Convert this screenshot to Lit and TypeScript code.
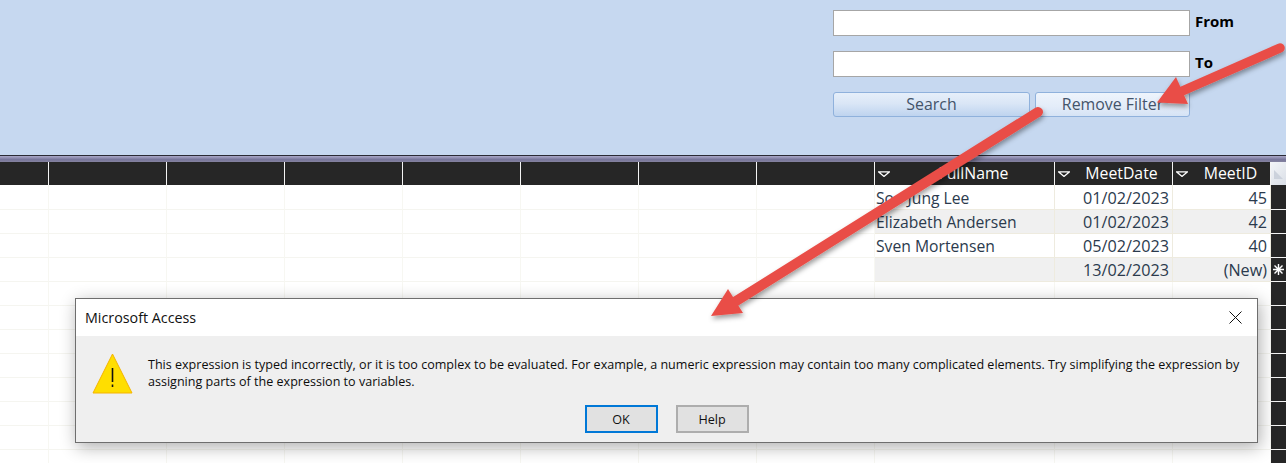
import { LitElement, html, css, svg } from "lit";
import { customElement } from "lit/decorators.js";

const blanks = [49, 118, 118, 118, 118, 118, 118, 118];
const rows = [
  ["Soo Jung Lee", "01/02/2023", "45", ""],
  ["Elizabeth Andersen", "01/02/2023", "42", ""],
  ["Sven Mortensen", "05/02/2023", "40", ""],
  ["", "13/02/2023", "(New)", "new"],
  ["", "", "", ""], ["", "", "", ""], ["", "", "", ""], ["", "", "", ""],
  ["", "", "", ""], ["", "", "", ""], ["", "", "", ""], ["", "", "", ""],
];

@customElement("app-root")
export class AppRoot extends LitElement {
  static styles = css`
    :host { display: block; position: relative; width: 1286px; height: 463px; overflow: hidden; background: #fff;
      font-family: "Open Sans", "Noto Sans", sans-serif; color: #2b3a4d; }
    .band { height: 155px; box-sizing: border-box; background: #c6d8f0; padding: 10px 0 0 833px; display: flex; flex-direction: column; gap: 15px; }
    .field { display: flex; align-items: center; gap: 5px; height: 26px; }
    .field input { width: 357px; height: 26px; box-sizing: border-box; border: 1px solid #a6a6a6; background: #fff; margin: 0; padding: 0; }
    .field label { font-weight: 700; font-size: 15px; color: #000; position: relative; top: -2px; }
    .btns { display: flex; gap: 5px; }
    .btn { height: 25px; box-sizing: border-box; border: 1px solid #8fb1dc; border-radius: 3px; font-size: 15.9px; color: #44546a; text-align: center; line-height: 23px;
      background: linear-gradient(#e6effa, #dae6f6 45%, #bed3ef); }
    .search { width: 197px; }
    .remove { width: 155px; background: linear-gradient(#eef4fc, #e3ecf9 60%, #d5e3f5); }
    .divider { height: 7px; border-top: 1px solid #2a2a35; box-sizing: border-box; background: linear-gradient(#aaa8c8, #77759a 60%, #85839f); }
    .grid { display: grid; grid-template-columns: 49px repeat(7, 118px) 180px 118px 98px 15px; }
    .hd { height: 23px; background: #262626; box-sizing: border-box; border-right: 1px solid #f4f4f4; color: #fff; font-size: 15.8px; line-height: 22px; text-align: center; position: relative; white-space: nowrap; }
    .hd.name { padding-left: 18px; }
    .hd.date { padding-left: 16px; }
    .hd.id { padding-left: 18px; }
    .hd svg { position: absolute; left: 3px; top: 9px; }
    .sel-hd { height: 23px; background: linear-gradient(135deg, #f3f5f8, #d9dee6); display: flex; align-items: flex-start; justify-content: center; padding-top: 8px; box-sizing: border-box; }
    .c { height: 24px; box-sizing: border-box; border-right: 1px solid #f7f7f2; border-bottom: 1px solid #f5f5f0; background: #fff; line-height: 24px; white-space: nowrap; overflow: hidden; }
    .c.top { height: 25px; padding-top: 1px; }
    .c.data { border-right-color: #eeebdf; border-bottom-color: #eeebdf; color: #2b3a4d; }
    .c.alt { background: #f0f0f0; }
    .c.txt { padding-left: 1px; font-size: 15.7px; }
    .c.num { padding-right: 3px; text-align: right; font-size: 16.2px; }
    .sel { height: 24px; box-sizing: border-box; background: #262626; border-bottom: 1px solid #f4f4f4; display: flex; align-items: center; justify-content: center; }
    .sel.top { height: 25px; }
    .arrows { position: absolute; left: 0; top: 0; z-index: 3; pointer-events: none; overflow: visible; }
    .dialog { position: absolute; left: 75px; top: 298px; width: 1183px; height: 145px; box-sizing: border-box; z-index: 2; border: 1px solid #6e6e6e; background: #efefef;
      box-shadow: 2px 4px 16px rgba(0,0,0,.32); color: #000; display: flex; flex-direction: column; }
    .title { height: 37px; flex: none; background: #fff; display: flex; align-items: center; justify-content: space-between; padding: 0 15px 0 9px; font-size: 14.3px; color: #111; }
    .body { flex: none; height: 69px; box-sizing: border-box; display: flex; padding: 17px 0 0 16px; gap: 15px; }
    .msg { font-size: 12.55px; line-height: 17px; width: 1100px; margin-top: 3px; color: #0c0c0c; }
    .actions { display: flex; justify-content: center; gap: 18px; }
    .ok, .help { width: 73px; height: 28px; box-sizing: border-box; background: #e1e1e1; border: 2px solid #adadad; font-size: 12.6px; text-align: center; line-height: 26px; color: #111; }
    .ok { border-color: #0078d7; }
  `;

  private filter() {
    return html`<svg width="12" height="6" viewBox="0 0 12 6"><path d="M.5 .8h11L6 5.500z" fill="none" stroke="#fff" stroke-width="1.200"/></svg>`;
  }

  render() {
    return html`
      <div class="band">
        <div class="field"><input /><label>From</label></div>
        <div class="field"><input /><label>To</label></div>
        <div class="btns"><div class="btn search">Search</div><div class="btn remove">Remove Filter</div></div>
      </div>
      <div class="divider"></div>
      <div class="grid">
        ${blanks.map(() => html`<div class="hd"></div>`)}
        <div class="hd name">${this.filter()}FullName</div>
        <div class="hd date">${this.filter()}MeetDate</div>
        <div class="hd id">${this.filter()}MeetID</div>
        <div class="sel-hd"><svg width="9" height="9" viewBox="0 0 9 9"><path d="M0 0L9 9H0z" fill="#ccd2dc"/></svg></div>
        ${rows.map((r, i) => {
          const top = i === 0 ? "top" : "";
          const used = i < 4;
          const alt = used && i % 2 === 1 ? "alt" : "";
          const d = used ? "data" : "";
          return html`
            ${blanks.map(() => html`<div class="c ${top}"></div>`)}
            <div class="c txt ${top} ${d} ${alt}">${r[0]}</div>
            <div class="c num ${top} ${d} ${alt}">${r[1]}</div>
            <div class="c num ${top} ${d} ${alt}">${r[2]}</div>
            <div class="sel ${top}">${r[3] ? html`<svg width="11" height="11" viewBox="0 0 11 11"><path d="M5.5 0v11M0 5.5h11M1.5 1.5l8 8M9.5 1.5l-8 8" stroke="#fff" stroke-width="1.4"/></svg>` : ""}</div>`;
        })}
      </div>
      <div class="dialog">
        <div class="title"><span>Microsoft Access</span>
          <svg width="13" height="13" viewBox="0 0 13 13"><path d="M.5.5l12 12M12.5.5l-12 12" stroke="#111" stroke-width="1"/></svg></div>
        <div class="body">
          <svg width="41" height="41" viewBox="0 0 41 41"><path d="M20.5 1L40 40H1z" fill="#ffde00" stroke="#f5b400" stroke-width="1"/><path d="M20.5 15v14" stroke="#111" stroke-width="1.6"/><path d="M20.5 31.500v2.500" stroke="#111" stroke-width="1.6"/></svg>
          <div class="msg">This expression is typed incorrectly, or it is too complex to be evaluated. For example, a numeric expression may contain too many complicated elements. Try simplifying the expression by assigning parts of the expression to variables.</div>
        </div>
        <div class="actions"><div class="ok">OK</div><div class="help">Help</div></div>
      </div>
      <svg class="arrows" width="1286" height="463" viewBox="0 0 1286 463">
        <defs><filter id="sh" x="-10%" y="-10%" width="120%" height="120%"><feDropShadow dx="1" dy="3" stdDeviation="2.500" flood-color="#000" flood-opacity=".38"/></filter></defs>
        <g filter="url(#sh)">
          ${svg`<path d="M1280 48L1180 92" stroke="#e94e47" stroke-width="9.500" stroke-linecap="round"/>
          <path d="M1157 102.500L1176 77L1188 104z" fill="#e94e47"/>
          <path d="M1038 112L733 303" stroke="#e94e47" stroke-width="10" stroke-linecap="round"/>
          <path d="M711 316L728 289L743 313z" fill="#e94e47"/>`}
        </g>
      </svg>
    `;
  }
}
